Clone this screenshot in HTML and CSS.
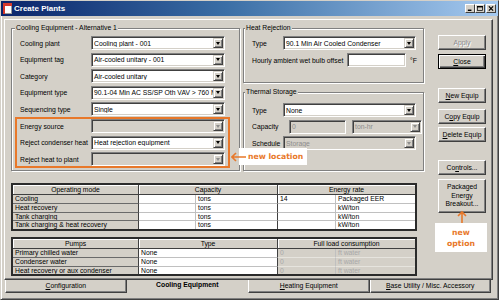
FILE: index.html
```html
<!DOCTYPE html>
<html lang="en">
<head>
  <meta charset="UTF-8">
  <title>Create Plants</title>
  <link rel="stylesheet" href="styles.css">
</head>
<body>
  <div class="window">
    <div class="titlebar">
      <svg class="app-icon" width="9" height="11" viewBox="0 0 9 11">
        <rect x="0.5" y="0.5" width="8" height="10" fill="#fff" stroke="#9a9a9a"/>
        <rect x="0" y="0" width="9" height="3" fill="#d6392b"/>
        <rect x="0" y="0" width="2" height="11" fill="#d6392b"/>
      </svg>
      <span class="title">Create Plants</span>
      <div class="caption-btns">
        <span class="cap-btn"><svg width="8" height="7" viewBox="0 0 8 7"><rect x="1" y="5" width="5" height="2" fill="#000"/></svg></span>
        <span class="cap-btn"><svg width="8" height="7" viewBox="0 0 8 7"><rect x="0.5" y="0.5" width="7" height="6" fill="none" stroke="#000"/><rect x="0" y="0" width="8" height="2" fill="#000"/></svg></span>
        <span class="cap-btn close-x"><svg width="8" height="7" viewBox="0 0 8 7"><path d="M1 0.5 L7 6.5 M7 0.5 L1 6.5" stroke="#000" stroke-width="1.6"/></svg></span>
      </div>
    </div>

    <div class="page">
      <div class="main">
        <div class="top">
          <fieldset class="group cooling">
            <legend>Cooling Equipment - Alternative 1</legend>
            <div class="row"><span>Cooling plant</span><div class="combo"><span class="val">Cooling plant - 001</span><b class="drop"></b></div></div>
            <div class="row"><span>Equipment tag</span><div class="combo"><span class="val">Air-cooled unitary - 001</span><b class="drop"></b></div></div>
            <div class="row"><span>Category</span><div class="combo"><span class="val">Air-cooled unitary</span><b class="drop"></b></div></div>
            <div class="row"><span>Equipment type</span><div class="combo"><span class="val">90.1-04 Min AC SS/SP Oth VAV &gt; 760 MBH</span><b class="drop"></b></div></div>
            <div class="row"><span>Sequencing type</span><div class="combo"><span class="val">Single</span><b class="drop"></b></div></div>
            <div class="highlight">
              <div class="row"><span>Energy source</span><div class="combo off"><span class="val"></span><b class="drop"></b></div></div>
              <div class="row"><span>Reject condenser heat</span><div class="combo"><span class="val">Heat rejection equipment</span><b class="drop"></b></div></div>
              <div class="row"><span>Reject heat to plant</span><div class="combo off"><span class="val"></span><b class="drop"></b></div></div>
            </div>
          </fieldset>

          <div class="midcol">
            <fieldset class="group heat">
              <legend>Heat Rejection</legend>
              <div class="mrow"><span>Type</span><div class="combo"><span class="val">90.1 Min Air Cooled Condenser</span><b class="drop"></b></div></div>
              <div class="mrow offset"><span>Hourly ambient wet bulb offset</span><div class="edit"></div><span class="unit">°F</span></div>
            </fieldset>
            <fieldset class="group storage">
              <legend>Thermal Storage</legend>
              <div class="mrow"><span>Type</span><div class="combo"><span class="val">None</span><b class="drop"></b></div></div>
              <div class="mrow capacity"><span>Capacity</span><div class="edit off">0</div><div class="combo off"><span class="val">ton-hr</span><b class="drop"></b></div></div>
              <div class="mrow"><span>Schedule</span><div class="combo off"><span class="val">Storage</span><b class="drop"></b></div></div>
            </fieldset>
          </div>
        </div>

        <table class="grid modes">
          <colgroup><col class="c-lbl"><col class="c-v1"><col class="c-u1"><col class="c-v2"><col class="c-u2"></colgroup>
          <tr><th>Operating mode</th><th colspan="2">Capacity</th><th colspan="2" class="last">Energy rate</th></tr>
          <tr><td class="lbl">Cooling</td><td class="v"></td><td class="u">tons</td><td class="v">14</td><td class="u last">Packaged EER</td></tr>
          <tr><td class="lbl">Heat recovery</td><td class="v"></td><td class="u">tons</td><td class="v"></td><td class="u last">kW/ton</td></tr>
          <tr><td class="lbl">Tank charging</td><td class="v"></td><td class="u">tons</td><td class="v"></td><td class="u last">kW/ton</td></tr>
          <tr class="end"><td class="lbl">Tank charging &amp; heat recovery</td><td class="v"></td><td class="u">tons</td><td class="v"></td><td class="u last">kW/ton</td></tr>
        </table>

        <table class="grid pumps">
          <colgroup><col class="c-lbl"><col class="c-type"><col class="c-v2"><col class="c-u2"></colgroup>
          <tr><th>Pumps</th><th>Type</th><th colspan="2" class="last">Full load consumption</th></tr>
          <tr><td class="lbl">Primary chilled water</td><td class="u">None</td><td class="v off">0</td><td class="u off last">ft water</td></tr>
          <tr><td class="lbl">Condenser water</td><td class="u">None</td><td class="v off">0</td><td class="u off last">ft water</td></tr>
          <tr class="end"><td class="lbl">Heat recovery or aux condenser</td><td class="u">None</td><td class="v off">0</td><td class="u off last">ft water</td></tr>
        </table>
      </div>

      <div class="btncol">
        <div class="btn disabled apply">Apply</div>
        <div class="btn default close"><u>C</u>lose</div>
        <div class="btn new-equip"><u>N</u>ew Equip</div>
        <div class="btn copy-equip">C<u>o</u>py Equip</div>
        <div class="btn delete-equip"><u>D</u>elete Equip</div>
        <div class="btn controls">Co<u>n</u>trols...</div>
        <div class="btn packaged">Packaged<br>Energy<br>Breakout...</div>
        <svg class="up-arrow" width="12" height="16" viewBox="0 0 12 16">
          <path d="M6 2 V16 M2 6 L6 2 L10 6" fill="none" stroke="#e8782a" stroke-width="1.6"/>
        </svg>
        <div class="note option">new<br>option</div>
      </div>

      <div class="callout">
        <svg class="left-arrow" width="16" height="10" viewBox="0 0 16 10">
          <path d="M1 5 H15 M5 1 L1 5 L5 9" fill="none" stroke="#e8782a" stroke-width="1.6"/>
        </svg>
        <span class="note">new location</span>
      </div>
    </div>

    <div class="tabs">
      <div class="tab"><u>C</u>onfiguration</div>
      <div class="tab active">Cooling Equipment</div>
      <div class="tab"><u>H</u>eating Equipment</div>
      <div class="tab"><u>B</u>ase Utility / Misc. Accessory</div>
    </div>
  </div>
</body>
</html>
```

FILE: styles.css
```css
*{
  margin: 0;
  padding: 0;
  box-sizing: border-box;
}
body{
  background: #fff;
  font-family: "Liberation Sans", Arial, sans-serif;
  font-size: 6.8px;
  color: #000;
}
.window{
  width: 499px;
  height: 300px;
  background: #d4d0c8;
  border: 1px solid;
  border-color: #d4d0c8 #404040 #404040 #d4d0c8;
  box-shadow: inset 1px 1px 0 #fff, inset -1px -1px 0 #808080;
}

/* title bar */
.titlebar{
  height: 15px;
  display: flex;
  align-items: center;
  padding-left: 2px;
  background: linear-gradient(to right, #0a246a, #3a6ea5 45%, #a6caf0);
}
.title{
  margin-left: 2px;
  color: #fff;
  font-weight: bold;
  font-size: 8px;
}
.caption-btns{
  display: flex;
  margin-left: auto;
  margin-right: 2px;
}
.cap-btn{
  width: 10px;
  height: 9px;
  display: flex;
  align-items: center;
  justify-content: center;
  background: #d4d0c8;
  border: 1px solid;
  border-color: #fff #404040 #404040 #fff;
}
.cap-btn svg{
  width: 6px;
  height: 5px;
}
.close-x{
  margin-left: 1px;
}

/* tab page */
.page{
  position: relative;
  display: flex;
  width: 489px;
  height: 261px;
  margin: 3px 0 0 3px;
  padding: 4px 6px 0 6px;
  border: 1px solid;
  border-color: #fff #404040 #404040 #fff;
  box-shadow: inset -1px -1px 0 #808080;
}
.main{
  width: 413px;
}
.top{
  display: flex;
  align-items: flex-start;
  gap: 3px;
}
.group{
  min-width: 0;
  border: 1px solid #808080;
  box-shadow: 1px 1px 0 #fff, inset 1px 1px 0 #fff;
}
.group legend{
  line-height: 8px;
  padding: 0 1px;
  background: #d4d0c8;
}
.cooling{
  width: 229px;
  padding: 4px 9px 2px 3px;
}
.midcol{
  width: 181px;
}
.heat{
  padding: 4px 0 15px 1px;
}
.storage{
  margin-top: 5px;
  padding: 7px 0 20px 1px;
}

/* form rows */
.row{
  display: grid;
  grid-template-columns: 71px 134px;
  align-items: center;
  height: 14px;
  padding-left: 5px;
  margin-bottom: 2.5px;
}
.highlight{
  margin-top: -1.5px;
  padding: 0 1px 0 3px;
  border: 2px solid #e8782a;
}
.highlight .row{
  padding-left: 0;
}
.highlight .row:last-child{
  margin-bottom: 0;
}
.mrow{
  display: grid;
  grid-template-columns: 31px 133px;
  align-items: center;
  height: 14px;
  padding-left: 7px;
  margin-bottom: 2.5px;
}
.heat .mrow{
  margin-bottom: 3px;
}
.group .mrow:last-child{
  margin-bottom: 0;
}
.mrow.offset{
  grid-template-columns: 95px 59px auto;
}
.mrow.capacity{
  grid-template-columns: 31px 57px 70px;
  column-gap: 6px;
}
.unit{
  padding-left: 4px;
}

/* controls */
.combo,
.edit{
  display: flex;
  align-items: center;
  height: 14px;
  background: #fff;
  border: 1px solid;
  border-color: #808080 #fff #fff #808080;
  box-shadow: inset 1px 1px 0 #404040, inset -1px -1px 0 #d4d0c8;
  overflow: hidden;
}
.combo .val{
  flex: 1;
  min-width: 0;
  padding-left: 2px;
  white-space: nowrap;
  overflow: hidden;
}
.edit{
  padding-left: 2px;
}
.drop{
  display: flex;
  align-items: center;
  justify-content: center;
  flex: none;
  width: 10px;
  height: 10px;
  margin-right: 1px;
  background: #d4d0c8;
  border: 1px solid;
  border-color: #d4d0c8 #404040 #404040 #d4d0c8;
  box-shadow: inset 1px 1px 0 #fff, inset -1px -1px 0 #808080;
}
.drop::after{
  content: '';
  border-left: 2.5px solid transparent;
  border-right: 2.5px solid transparent;
  border-top: 3px solid #000;
}
.off{
  background: #d4d0c8;
  color: #8c8c8c;
}
.combo.off .drop::after{
  border-top-color: #8c8c8c;
}

/* buttons */
.btncol{
  display: flex;
  flex-direction: column;
  width: 48px;
  margin-left: 14px;
}
.btn{
  height: 15px;
  line-height: 13px;
  text-align: center;
  white-space: nowrap;
  background: #d4d0c8;
  border: 1px solid;
  border-color: #fff #404040 #404040 #fff;
  box-shadow: inset -1px -1px 0 #808080;
}
.btn.disabled{
  color: #8c8c8c;
  text-shadow: 1px 1px 0 #fff;
}
.btn.default{
  border-color: #000;
  box-shadow: inset 1px 1px 0 #fff, inset -1px -1px 0 #404040, inset -2px -2px 0 #808080;
}
.apply{ margin-top: 11px; }
.close{ margin-top: 4px; }
.new-equip{ margin-top: 19px; }
.copy-equip{ margin-top: 6px; }
.delete-equip{ margin-top: 3px; }
.controls{ margin-top: 18px; }
.packaged{
  margin-top: 4px;
  height: 34px;
  line-height: 8.5px;
  padding-top: 3px;
}
.up-arrow{
  align-self: center;
  margin-top: -3px;
}

/* annotations */
.note{
  font-family: "DejaVu Sans", Verdana, sans-serif;
  font-weight: bold;
  font-size: 7.7px;
  color: #e8782a;
  background: #fff;
}
.option{
  margin: -3px -1px 0 -3px;
  height: 29px;
  padding-top: 4px;
  line-height: 11px;
  text-align: center;
}
.callout{
  position: absolute;
  left: 234px;
  top: 128px;
  width: 68px;
  height: 17px;
  display: flex;
  align-items: center;
  background: #fff;
}
.left-arrow{
  margin-left: -8px;
  flex: none;
}
.callout .note{
  padding-left: 1px;
}

/* grids */
.grid{
  width: 406px;
  table-layout: fixed;
  border-collapse: separate;
  border-spacing: 0;
  border: 2px solid #2b2b2b;
  background: #fff;
}
.modes{
  margin-top: 12px;
}
.pumps{
  margin-top: 6px;
}
.c-lbl{ width: 126px; }
.c-v1{ width: 57px; }
.c-u1{ width: 82px; }
.c-v2{ width: 58px; }
.c-u2{ width: 79px; }
.c-type{ width: 139px; }
.grid th{
  height: 10px;
  line-height: 9px;
  font-weight: normal;
  background: #d4d0c8;
  border-right: 1px solid #404040;
  border-bottom: 1px solid #404040;
  box-shadow: inset 1px 1px 0 #fff;
}
.grid td{
  line-height: 7.75px;
  padding: 0 2px;
  white-space: nowrap;
  overflow: hidden;
  border-bottom: 1px solid #c0c0c0;
}
.grid td.lbl{
  background: #d4d0c8;
  border-right: 1px solid #404040;
  border-bottom-color: #6a6a6a;
}
.grid td.v{
  border-right: 1px solid #c0c0c0;
}
.grid td.u{
  border-right: 1px solid #404040;
}
.grid td.off{
  color: #a8a8a8;
  border-bottom-color: #e6e4de;
}
.grid .last{
  border-right: none !important;
}
.grid tr.end td{
  border-bottom: none;
}

/* tabs */
.tabs{
  display: flex;
  width: 486px;
  margin-left: 4px;
}
.tab{
  flex: 1;
  height: 13px;
  line-height: 11px;
  text-align: center;
  white-space: nowrap;
  border-left: 1px solid #fff;
  border-right: 1px solid #404040;
  border-bottom: 1px solid #404040;
  box-shadow: inset -1px -1px 0 #808080;
}
.tab.active{
  margin-top: -1px;
  height: 14px;
  font-weight: bold;
  border-color: #d4d0c8;
  box-shadow: none;
}
```
